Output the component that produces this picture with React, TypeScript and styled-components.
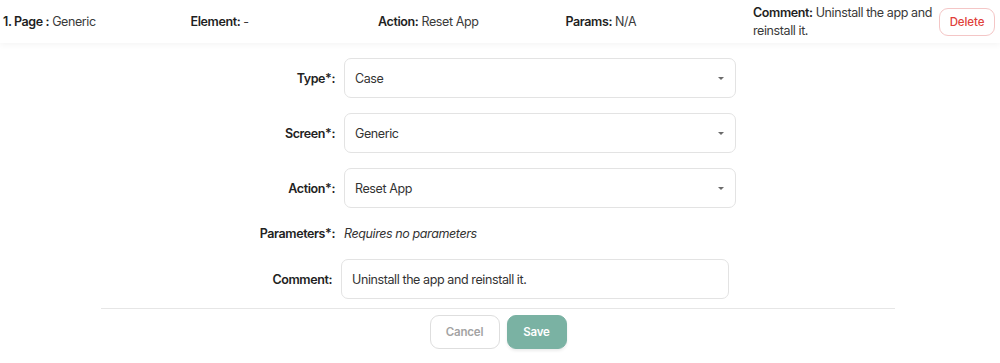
import React from "react";
import styled, { createGlobalStyle } from "styled-components";

const Global = createGlobalStyle`
  html, body { margin: 0; padding: 0; background: #fff; }
  body { font-family: Inter, "Noto Sans", Arial, sans-serif; color: #333; -webkit-font-smoothing: antialiased; }
  * { box-sizing: border-box; }
`;

const Page = styled.div`
  width: 1000px;
  height: 363px;
  background: #fff;
  overflow: hidden;
  letter-spacing: -0.4px;
`;

const Header = styled.div`
  height: 43px;
  display: grid;
  grid-template-columns: repeat(4, 187.5px) 186px 56px;
  align-items: center;
  padding-left: 3px;
  background: #fff;
  box-shadow: 0 2px 6px rgba(0, 0, 0, 0.045);
  position: relative;
  z-index: 1;
`;

const Cell = styled.div`
  font-size: 12.5px;
  line-height: 18px;
  color: #3a3a3a;
  padding-right: 2px;
`;

const Key = styled.span`
  font-weight: 600;
  color: #1f1f1f;
`;

const DeleteButton = styled.button`
  width: 56px;
  height: 28px;
  border: 1px solid #f4c6c6;
  border-radius: 9px;
  background: #fff;
  color: #e0403a;
  font-family: inherit;
  font-size: 11.5px;
  font-weight: 500;
  letter-spacing: -0.1px;
  padding: 0;
  cursor: pointer;
`;

const Form = styled.div`
  display: flex;
  flex-direction: column;
  gap: 15px;
  padding-top: 15px;
`;

const Row = styled.div<{ $left?: number; $width?: number; $height?: number }>`
  display: grid;
  grid-template-columns: 100px ${(p) => p.$width || 392}px;
  column-gap: 9px;
  align-items: center;
  padding-left: ${(p) => p.$left ?? 235}px;
  height: ${(p) => p.$height || 40}px;
`;

const Label = styled.label`
  text-align: right;
  font-size: 12.5px;
  font-weight: 600;
  color: #222;
  white-space: nowrap;
`;

const SelectBox = styled.div`
  height: 40px;
  border: 1px solid #e3e3e3;
  border-radius: 7px;
  display: flex;
  align-items: center;
  justify-content: space-between;
  padding: 0 11px 0 10px;
  font-size: 12.5px;
  color: #333;
  background: #fff;
`;

const Caret = styled.span`
  width: 0;
  height: 0;
  border-left: 3.5px solid transparent;
  border-right: 3.5px solid transparent;
  border-top: 3.5px solid #6b6b6b;
`;

const Hint = styled.span`
  font-size: 12.5px;
  font-style: italic;
  color: #333;
`;

const TextInput = styled.div`
  height: 40px;
  border: 1px solid #e3e3e3;
  border-radius: 7px;
  display: flex;
  align-items: center;
  padding: 0 10px;
  font-size: 12.5px;
  color: #333;
  background: #fff;
`;

const Footer = styled.div`
  margin: 9px 0 0 101px;
  width: 794px;
  border-top: 1px solid #e6e6e6;
  padding-top: 6px;
  display: flex;
  justify-content: center;
  gap: 7px;
`;

const Button = styled.button<{ $primary?: boolean; $w: number }>`
  width: ${(p) => p.$w}px;
  height: 34px;
  border-radius: 9px;
  font-family: inherit;
  font-size: 11.5px;
  font-weight: 600;
  letter-spacing: -0.2px;
  padding: 0;
  cursor: pointer;
  border: 1px solid ${(p) => (p.$primary ? "#7ab2a3" : "#dedede")};
  background: ${(p) => (p.$primary ? "#7ab2a3" : "#fff")};
  color: ${(p) => (p.$primary ? "#fff" : "#a3a3a3")};
  box-shadow: ${(p) => (p.$primary ? "0 2px 3px rgba(0,0,0,0.08)" : "none")};
`;

const selects = [
  { label: "Type*:", value: "Case" },
  { label: "Screen*:", value: "Generic" },
  { label: "Action*:", value: "Reset App" },
];

export default function App() {
  return (
    <Page>
      <Global />
      <Header>
        <Cell>
          <Key>1. Page :</Key> Generic
        </Cell>
        <Cell>
          <Key>Element:</Key> -
        </Cell>
        <Cell>
          <Key>Action:</Key> Reset App
        </Cell>
        <Cell>
          <Key>Params:</Key> N/A
        </Cell>
        <Cell>
          <Key>Comment:</Key> Uninstall the app and reinstall it.
        </Cell>
        <DeleteButton>Delete</DeleteButton>
      </Header>
      <Form>
        {selects.map((s) => (
          <Row key={s.label}>
            <Label>{s.label}</Label>
            <SelectBox>
              <span>{s.value}</span>
              <Caret />
            </SelectBox>
          </Row>
        ))}
        <Row $height={21}>
          <Label>Parameters*:</Label>
          <Hint>Requires no parameters</Hint>
        </Row>
        <Row $left={232} $width={388}>
          <Label>Comment:</Label>
          <TextInput>Uninstall the app and reinstall it.</TextInput>
        </Row>
      </Form>
      <Footer>
        <Button $w={70}>Cancel</Button>
        <Button $w={60} $primary>
          Save
        </Button>
      </Footer>
    </Page>
  );
}
